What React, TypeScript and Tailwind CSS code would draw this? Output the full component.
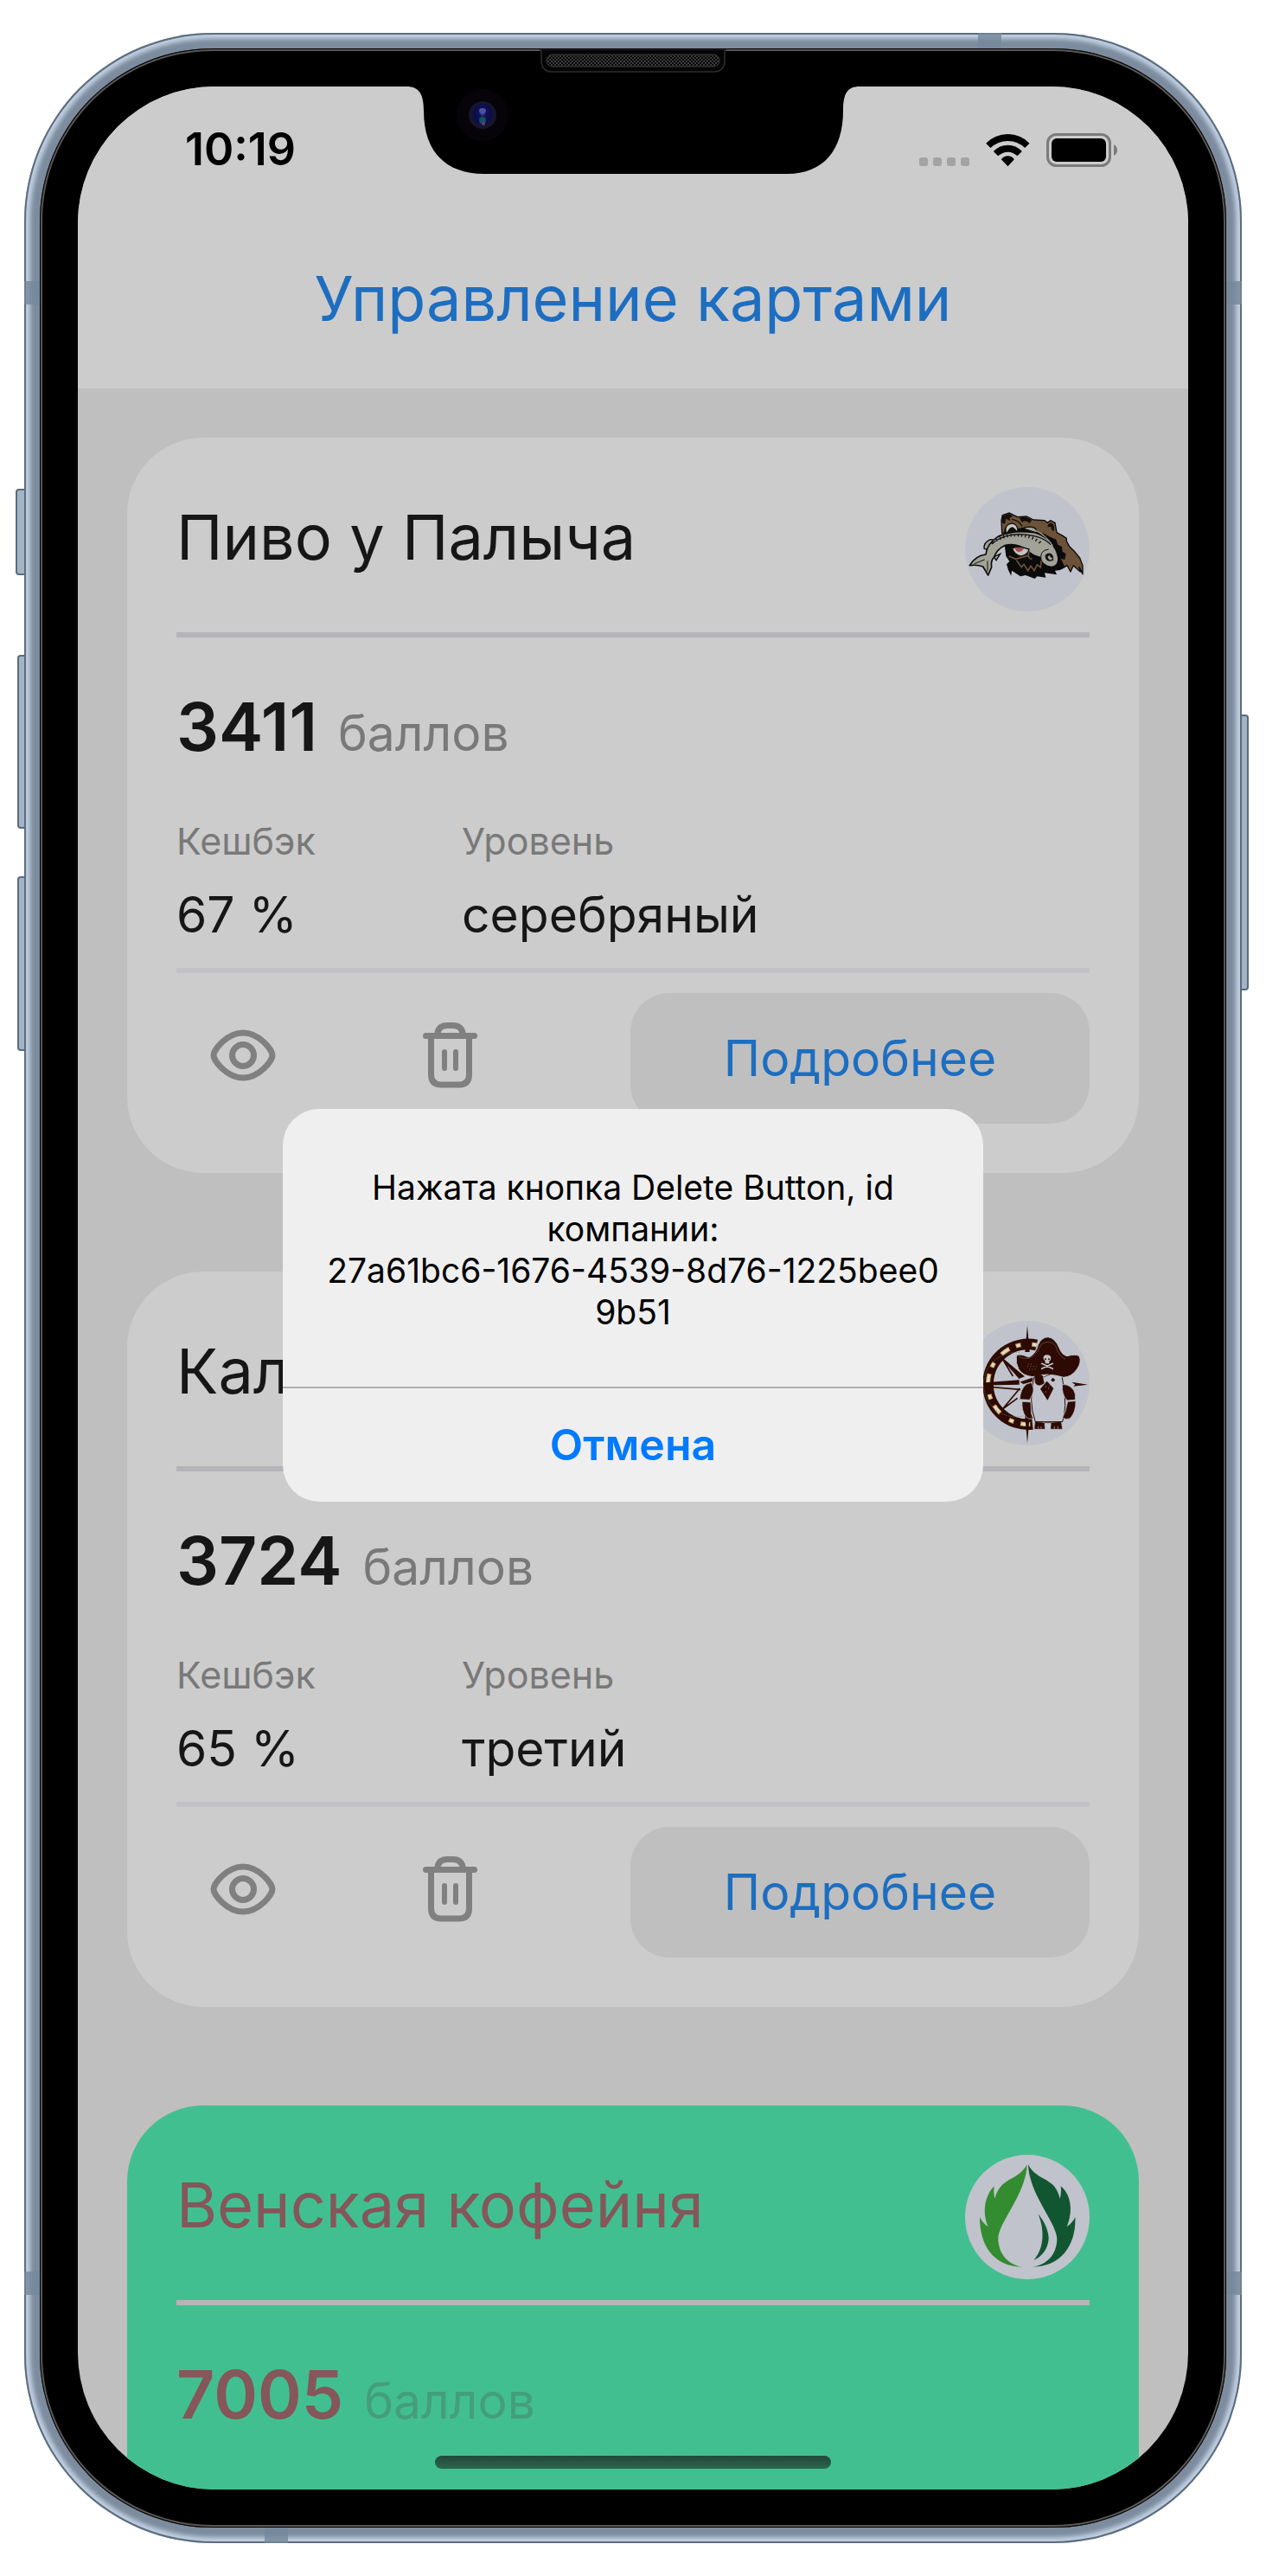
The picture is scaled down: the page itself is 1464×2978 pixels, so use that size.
import React from "react";

function BearLogo() {
  return (
    <svg viewBox="108 68 432 432" className="size-[144px] shrink-0" role="img" aria-label="Медведь с рыбой">
      <circle cx="324" cy="284" r="216" fill="#c0c3cb" />
      <path
        d="M246 276L250 308 262 326 252 336 258 356 268 376 270 358 300 378 318 374 350 386 358 378 388 382 384 366 426 372 420 358 438 356 454 348 446 330 458 300 440 262 400 216 300 200 240 230Z"
        fill="#0b0b0b"
      />
      <path
        d="M236 228L234 184 238 166 262 158 290 172 322 170 346 182 384 184 394 192 404 184 420 192 426 226 448 238 460 246 460 256 470 274 486 290 506 314 516 340 516 370 504 346 508 362 494 350 484 340 474 362 462 340 452 346 440 320 420 280 380 240 320 208Z"
        fill="#6b5238"
        stroke="#0b0b0b"
        strokeWidth="4"
        strokeLinejoin="round"
      />
      <path
        d="M376 226L400 240 424 250 430 268 444 276 446 292 458 300 454 320 440 316 420 284 390 250Z"
        fill="#0b0b0b"
      />
      <path d="M236 170L262 160 274 170 262 176 266 186 250 178 246 196 236 192Z" fill="#16100c" />
      <path d="M296 176Q312 164 340 182L332 194Q318 182 306 190ZM394 206Q396 190 410 194 420 202 416 220 408 222 406 206Z" fill="#16100c" />
      <path d="M270 180Q296 184 306 204" fill="none" stroke="#16100c" strokeWidth="4" />
      <path d="M242 230Q244 196 270 192 292 194 296 226Z" fill="#16100c" />
      <path d="M252 226Q246 198 270 196 290 198 288 220L280 212Q272 202 262 212Z" fill="#c4c5c4" />
      <path d="M174 282Q172 260 196 250L214 252 188 286ZM208 310L216 322 230 300ZM308 212Q326 202 350 210L364 230Z" fill="#a3a298" stroke="#0b0b0b" strokeWidth="4" />
      <path
        d="M124 340Q144 306 180 302Q184 264 222 240Q270 216 350 226Q400 240 422 284Q438 318 428 334Q414 352 392 342Q372 332 368 312Q340 306 324 288Q290 262 248 270Q218 284 208 312Q196 324 200 346L188 374 170 344Q148 336 124 340Z"
        fill="#a3a298"
        stroke="#0b0b0b"
        strokeWidth="5"
        strokeLinejoin="round"
      />
      <path
        d="M200 266Q234 234 290 232 370 232 406 268M208 264l-8-8M220 256l-6-10M232 250l-4-10M244 246l-3-10M256 243l-2-10M268 241l-1-10M280 240v-10M292 240l1-10M304 241l2-10M316 243l3-10M328 246l4-10M340 250l5-9M352 256l6-8M364 263l7-7"
        fill="none"
        stroke="#11110f"
        strokeWidth="4"
      />
      <path d="M352 218Q392 238 412 272" fill="none" stroke="#a3a298" strokeWidth="4" />
      <path d="M372 318Q366 288 398 284M140 334l36-14M186 360V324" fill="none" stroke="#11110f" strokeWidth="3" />
      <path d="M386 304Q396 294 408 300 416 308 414 322 402 328 392 322 384 314 386 304Z" fill="#11110f" />
      <path d="M394 310l8-6 2 8 8 2-6 8-8-4z" fill="#a3a298" />
      <path d="M272 280Q296 272 330 284 326 304 302 308 278 304 272 280Z" fill="#c6c2bd" stroke="#15100e" strokeWidth="4" />
      <path d="M280 280Q294 274 312 282 306 292 294 294 284 290 280 280Z" fill="#a34d52" />
      <path
        d="M260 308L284 318 304 312 326 306M286 322L304 346 312 336 326 358 336 342 348 358 358 338 370 346 372 324M330 292Q322 314 340 318"
        fill="none"
        stroke="#6b5238"
        strokeWidth="5"
      />
    </svg>
  );
}

function PirateLogo() {
  return (
    <svg viewBox="108 80 432 432" className="size-[144px] shrink-0" role="img" aria-label="Пингвин-пират">
      <circle cx="324" cy="296" r="216" fill="#c0c3cb" />
      <path d="M342 438A139 139 0 1 1 356 164" fill="none" stroke="#2d0b04" strokeWidth="38" />
      <path d="M342 438A139 139 0 1 1 356 164" fill="none" stroke="#c9a552" strokeWidth="15" strokeDasharray="34 24 18 38" strokeDashoffset="-8" />
      <path d="M342 438A139 139 0 1 1 356 164" fill="none" stroke="#dddbd6" strokeWidth="9" strokeDasharray="28 30 12 44" strokeDashoffset="-11" />
      <path d="M310 410A112 112 0 1 1 300 190" fill="none" stroke="#7e7a5c" strokeWidth="2" strokeDasharray="4 4" />
      <path d="M324 96l8 92h-16zM324 504l-8-94h16zM534 301l-56-9 12 9-6 6zM110 299l186-14v16l-186 4z" fill="#2d0b04" />
      <path d="M238 212l72 60-14 6zM238 212l36 60M238 386l60-72M238 386l52-38M180 308l120 10" fill="#2d0b04" stroke="#2d0b04" strokeWidth="5" />
      <path
        d="M348 270Q378 256 444 270L450 310Q462 380 446 430H352Q326 360 348 270Z"
        fill="#c0c3cb"
        stroke="#2d0b04"
        strokeWidth="3"
      />
      <path
        d="M286 200q14-8 42 6 24-8 34-44 12-26 34-26 24 2 40 40 8 22 26 26 30-8 42 0 10 20-8 46-18 26-46 28-60-18-108-2-34-4-48-26-12-22-8-48z"
        fill="#2d0b04"
        stroke="#c0c3cb"
        strokeWidth="3"
      />
      <path d="M294 204q30 14 50-2 18-14 28-40 28-20 50 4 12 40 34 46" fill="none" stroke="#72594f" strokeWidth="2" />
      <path d="M380 212q-2-14 12-14t14 12q0 8-6 10v8h-14v-8z" fill="#c5c4c3" />
      <path d="M374 228l38 18M412 228l-38 18" stroke="#c5c4c3" strokeWidth="5" strokeLinecap="round" />
      <circle cx="387" cy="213" r="3" fill="#2d0b04" />
      <circle cx="399" cy="213" r="3" fill="#2d0b04" />
      <path d="M324 238h34M330 248h26M326 230h18" stroke="#765f4e" strokeWidth="3" strokeDasharray="3 7" />
      <path
        d="M350 270q14-8 26 0l6 26q-18 14-30 0zM376 276l28-10M392 290l22 24-20 40-24-38zM300 292l42-14-2 12-30 8z"
        fill="#2d0b04"
        stroke="#2d0b04"
        strokeWidth="2"
      />
      <path d="M388 306v4M398 312v4M388 324v4M400 304v2" stroke="#8f7d75" strokeWidth="3" />
      <circle cx="413" cy="285" r="6" fill="#2d0b04" />
      <path
        d="M338 294Q350 316 342 334L332 354 298 352Q300 318 320 300ZM306 360L336 362 338 402 344 418Q328 424 318 412 304 390 306 360ZM446 300Q482 302 490 334V354L462 356Q442 334 446 300ZM464 360L492 358Q492 398 472 418 458 424 446 416L456 394Z"
        fill="#2d0b04"
        stroke="#c0c3cb"
        strokeWidth="2"
      />
      <path d="M352 430L382 434 384 454H350ZM384 433h24M408 434L440 430 444 454H406Z" fill="#2d0b04" stroke="#2d0b04" strokeWidth="2" />
      <path d="M362 446v8M372 446v8M418 446v8M430 446v8" stroke="#c0c3cb" strokeWidth="2" />
    </svg>
  );
}

function LeafLogo() {
  return (
    <svg viewBox="108 93 432 432" className="size-[144px] shrink-0" role="img" aria-label="Капля с листьями">
      <circle cx="324" cy="309" r="216" fill="#c0c3cb" />
      <path
        d="M323 127C300 170 258 174 232 203Q216 222 211 246Q206 226 209 202C174 238 167 296 188 342Q168 330 159 309C158 400 202 482 308 482C260 476 224 440 223 384C224 326 320 230 323 127Z"
        fill="#338c30"
      />
      <path
        d="M327 127C348 170 392 174 418 203Q432 222 437 246Q443 226 440 202C477 232 483 290 461 342Q481 330 490 309C494 398 448 482 340 482C392 476 426 440 427 384C424 326 330 230 327 127Z"
        fill="#115631"
      />
      <path d="M361 298C386 328 398 360 398 384C396 418 376 446 347 458C386 414 382 346 361 298Z" fill="#115631" />
    </svg>
  );
}

function EyeIcon() {
  return (
    <svg viewBox="0 0 80 64" className="h-16 w-20" fill="none" stroke="#808080" strokeWidth="7" aria-hidden="true">
      <path d="M6 32C6 26 21 6 40 6S74 26 74 32 59 58 40 58 6 38 6 32Z" />
      <circle cx="40" cy="32" r="12.5" />
    </svg>
  );
}

function TrashIcon() {
  return (
    <svg
      viewBox="0 0 63 76"
      className="h-[76px] w-[63px]"
      fill="none"
      stroke="#808080"
      strokeWidth="7"
      strokeLinecap="round"
      aria-hidden="true"
    >
      <path d="M3.5 15.5H59.5" />
      <path d="M9.5 16V60Q9.5 72 21 72H42Q53.5 72 53.5 60V16" />
      <path d="M16.5 14Q18 3.5 28 3.5H35Q45 3.5 46.5 14" />
      <path d="M25 34V53M38 34V53" strokeWidth="6" />
    </svg>
  );
}

function StatusIcons() {
  return (
    <div className="flex items-end gap-[19px]">
      <div className="flex gap-[6px] pb-px">
        <i className="size-[10px] rounded-[3px] bg-[#a3a3a3]" />
        <i className="size-[10px] rounded-[3px] bg-[#a3a3a3]" />
        <i className="size-[10px] rounded-[3px] bg-[#a3a3a3]" />
        <i className="size-[10px] rounded-[3px] bg-[#a3a3a3]" />
      </div>
      <svg viewBox="301 71 152 114" className="h-[38px] w-[51px]" aria-label="Wi-Fi" role="img">
        <path d="M301 103Q333 71 377 71T452 103L436 119Q411 95 377 95T317 119Z" />
        <path d="M327 131Q348 109 377 109T426 131L410 147Q396 133 377 133T343 147Z" />
        <path d="M354 159Q363 147 377 147T399 159L377 183Z" />
      </svg>
      <svg viewBox="0 0 82 39" className="h-[39px] w-[82px]" aria-label="Батарея" role="img">
        <rect x="1.5" y="1.5" width="72" height="36" rx="10" fill="none" stroke="#7b7b7b" strokeWidth="3" />
        <rect x="6" y="6" width="63" height="27" rx="6" />
        <path d="M78 13Q82 15 82 19.5T78 26Z" fill="#7b7b7b" />
      </svg>
    </div>
  );
}

function Notch() {
  return (
    <svg viewBox="0 0 524 102" className="absolute top-0 left-1/2 h-[102px] w-[524px] -translate-x-1/2" aria-hidden="true">
      <defs>
        <radialGradient id="lens" cx="50%" cy="40%" r="60%">
          <stop offset="0" stopColor="#5558b8" />
          <stop offset="0.3" stopColor="#10124e" />
          <stop offset="0.7" stopColor="#0b0b52" />
          <stop offset="1" stopColor="#15162b" />
        </radialGradient>
      </defs>
      <path d="M0 0H524C510 0 505 8 505 28C505 74 482 101 440 101H90C44 101 20 74 20 28C20 8 14 0 0 0Z" fill="#000" />
      <circle cx="88" cy="33" r="30" fill="#060408" />
      <circle cx="88" cy="33" r="16" fill="#15162b" />
      <ellipse cx="88" cy="33" rx="12" ry="13" fill="url(#lens)" />
      <ellipse cx="88" cy="28" rx="4" ry="3" fill="#4c51a8" />
      <ellipse cx="88" cy="39" rx="4" ry="4" fill="#14505c" />
      <circle cx="89" cy="43" r="2" fill="#6d3a80" />
    </svg>
  );
}

function Speaker() {
  return (
    <svg viewBox="0 0 216 28" className="absolute top-px left-1/2 h-7 w-[216px] -translate-x-1/2" aria-hidden="true">
      <defs>
        <pattern id="mesh" width="4" height="4" patternUnits="userSpaceOnUse">
          <path d="M0 0L4 4M4 0L0 4" stroke="#3c3c3c" strokeWidth="1" />
        </pattern>
      </defs>
      <path d="M0 1H2V16Q4 26 14 26H202Q212 26 214 16V1H216V0H0Z" fill="#050505" stroke="#2c2c2c" strokeWidth="1.5" />
      <rect x="8" y="6" width="200" height="14" rx="7" fill="url(#mesh)" stroke="#3a3a3a" />
    </svg>
  );
}

interface Company {
  name: string;
  points: number;
  cashback?: string;
  level?: string;
  logo: React.ReactNode;
}

function CardHead({ c, green }: { c: Company; green?: boolean }) {
  const ink = green ? "text-[#85565a]" : "text-[#161616]";
  return (
    <>
      <div className="flex items-start justify-between">
        <h2 className={`pt-[10px] text-[72px] leading-[96px] ${ink}`}>{c.name}</h2>
        {c.logo}
      </div>
      <hr className="mt-6 h-[6px] border-0 bg-[#b5b4b9]" />
      <p className="mt-[55px] flex h-24 items-baseline gap-6 leading-[96px]">
        <strong className={`text-[77px] font-semibold ${ink}`}>{c.points}</strong>
        <span className={`text-[57px] ${green ? "text-[#449e7c]" : "text-[#797979]"}`}>баллов</span>
      </p>
    </>
  );
}

function Card({ c }: { c: Company }) {
  return (
    <article className="rounded-[88px] bg-[#cccccc] p-[57px]">
      <CardHead c={c} />
      <dl className="mt-[54px] grid grid-cols-[5fr_11fr]">
        <div>
          <dt className="text-[43px] leading-[60px] text-[#797979]">Кешбэк</dt>
          <dd className="mt-5 text-[57px] leading-[72px] text-[#161616]">{c.cashback}</dd>
        </div>
        <div>
          <dt className="text-[43px] leading-[60px] text-[#797979]">Уровень</dt>
          <dd className="mt-5 text-[57px] leading-[72px] text-[#161616]">{c.level}</dd>
        </div>
      </dl>
      <hr className="mt-[25px] h-[6px] border-0 bg-[#c2c1c6]" />
      <div className="mt-[23px] flex items-start">
        <button aria-label="Скрыть" className="flex h-36 w-[153px] items-center justify-center">
          <EyeIcon />
        </button>
        <button aria-label="Удалить" className="ml-[87px] flex h-36 w-[153px] items-center justify-center">
          <TrashIcon />
        </button>
        <button className="ml-[132px] h-[151px] flex-1 rounded-[45px] bg-[#bfbfbf] text-[57px] text-[#1d6ec0]">
          Подробнее
        </button>
      </div>
    </article>
  );
}

function Alert() {
  return (
    <div className="absolute inset-0 flex items-center justify-center pt-[141px] pb-[102px]">
      <div role="alertdialog" aria-describedby="alert-text" className="w-[810px] overflow-hidden rounded-[42px] bg-[#efefef]">
        <p id="alert-text" className="px-12 pt-[67px] pb-[62px] text-center text-[39px] leading-[48px] break-all text-black">
          Нажата кнопка Delete Button, id
          <br />
          компании:
          <br />
          27a61bc6-1676-4539-8d76-1225bee0
          <br />
          9b51
        </p>
        <button className="h-[133px] w-full border-t-2 border-[#b0b0b2] text-[50px] font-semibold text-[#007aff]">Отмена</button>
      </div>
    </div>
  );
}

const sideKey = "absolute border-2 border-[#5c6c7c] bg-[#a3b4c7]";
const band = "absolute bg-[#74879a] opacity-80";

export default function App() {
  return (
    <main className="min-h-screen bg-white px-7 py-[38px] font-['Inter',sans-serif]">
      <div className="relative">
        <i className={`${sideKey} top-[527px] -left-[10px] h-[100px] w-4 rounded-l-[4px]`} />
        <i className={`${sideKey} top-[719px] -left-2 h-[201px] w-4 rounded-l-[4px]`} />
        <i className={`${sideKey} top-[975px] -left-2 h-[202px] w-4 rounded-l-[4px]`} />
        <i className={`${sideKey} top-[788px] -right-2 h-[319px] w-4 rounded-r-[4px]`} />
        <div className="relative rounded-[218px] bg-[#7c8c9e] p-[18px] shadow-[inset_0_0_0_2px_#5c6c7c,inset_0_0_5px_7px_#c0cfe1]">
          <i className={`${band} top-[287px] left-0 h-[27px] w-[18px]`} />
          <i className={`${band} top-[287px] right-0 h-[27px] w-[18px]`} />
          <i className={`${band} bottom-[287px] left-0 h-[27px] w-[18px]`} />
          <i className={`${band} top-0 right-[278px] h-[18px] w-[27px]`} />
          <i className={`${band} bottom-0 left-[278px] h-[18px] w-[27px]`} />
          <i className={`${band} right-0 bottom-[287px] h-[27px] w-[18px]`} />
          <div className="relative rounded-[200px] bg-black p-11 shadow-[inset_0_0_0_1px_#000,inset_0_0_0_3px_#5a5755]">
            <Speaker />
            <div className="relative overflow-hidden rounded-[158px] bg-[#bfbfbf]">
              <header className="bg-[#cccccc] pt-[43px] pb-[57px]">
                <div className="flex h-[60px] items-end justify-between pr-[82px] pl-[124px]">
                  <time className="text-[52px] leading-[60px] font-semibold text-black">10:19</time>
                  <div className="pb-[10px]">
                    <StatusIcons />
                  </div>
                </div>
                <h1 className="mt-[94px] -mb-px text-center text-[72px] leading-[96px] text-[#1d6ec0]">Управление картами</h1>
              </header>
              <section className="flex flex-col gap-[114px] px-[57px] pt-[57px]">
                <Card c={{ name: "Пиво у Палыча", points: 3411, cashback: "67 %", level: "серебряный", logo: <BearLogo /> }} />
                <Card c={{ name: "Кал", points: 3724, cashback: "65 %", level: "третий", logo: <PirateLogo /> }} />
                <article className="rounded-t-[88px] bg-[#42bf90] px-[57px] pt-[57px] pb-[62px]">
                  <CardHead green c={{ name: "Венская кофейня", points: 7005, logo: <LeafLogo /> }} />
                </article>
              </section>
              <Notch />
              <Alert />
              <i className="absolute bottom-6 left-1/2 h-[15px] w-[458px] -translate-x-1/2 rounded-full bg-linear-to-b from-[#22483a] to-[#2b6650]" />
            </div>
          </div>
        </div>
      </div>
    </main>
  );
}
